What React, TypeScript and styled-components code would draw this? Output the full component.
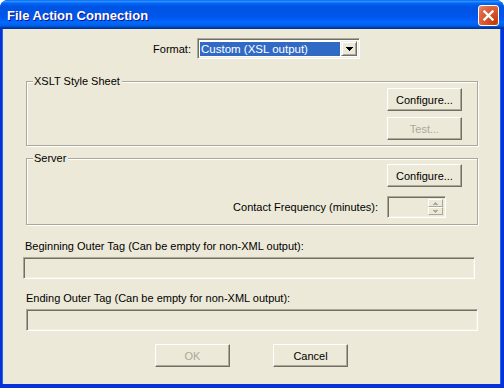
import React from "react";
import styled, { createGlobalStyle } from "styled-components";

const GlobalStyle = createGlobalStyle`
  html, body {
    margin: 0;
    padding: 0;
    background: #ffffff;
    overflow: hidden;
  }
  body {
    font-family: "Liberation Sans", Arial, sans-serif;
    font-size: 11px;
    color: #000;
  }
`;

const Window = styled.div`
  width: 504px;
  height: 388px;
  display: flex;
  flex-direction: column;
  box-sizing: border-box;
  border-radius: 8px 8px 0 0;
  background: #0831d9;
  overflow: hidden;
`;

const TitleBar = styled.div`
  height: 29px;
  flex: 0 0 29px;
  display: flex;
  align-items: center;
  justify-content: space-between;
  padding: 0 5px 0 7px;
  background: linear-gradient(
    to bottom,
    #0058ee 0%,
    #3593ff 4%,
    #288eff 6%,
    #127dff 8%,
    #036ffc 10%,
    #0262ee 14%,
    #0057e5 20%,
    #0054e3 24%,
    #0055eb 56%,
    #005bf5 66%,
    #026afe 76%,
    #0062ef 86%,
    #0052d6 92%,
    #0040ab 94%,
    #003092 100%
  );
`;

const Title = styled.span`
  font-family: "Liberation Sans", Arial, sans-serif;
  font-weight: bold;
  font-size: 13px;
  color: #fff;
  text-shadow: 1px 1px 0 #0f1089;
  margin-top: 1px;
`;

const CloseButton = styled.div`
  width: 21px;
  height: 21px;
  box-sizing: border-box;
  border: 1px solid #fff;
  border-radius: 3px;
  display: flex;
  align-items: center;
  justify-content: center;
  background: radial-gradient(
    circle at 85% 85%,
    #c43c0a 0%,
    #d9542a 45%,
    #e06a45 75%,
    #e8907a 100%
  );
  margin-top: 1px;
`;

const Body = styled.div`
  flex: 1;
  margin: 0 4px 4px 3px;
  background: #ece9d8;
  display: flex;
  flex-direction: column;
  padding-top: 9px;
  box-shadow: -1px 0 0 #166aee, 1px 0 0 #166aee;
`;

const FormatRow = styled.div`
  display: flex;
  align-items: center;
  gap: 6px;
  margin-left: 147px;
  height: 21px;
`;

const FormatLabel = styled.span`
  width: 41px;
  text-align: right;
`;

const Combo = styled.div`
  width: 163px;
  height: 21px;
  box-sizing: border-box;
  display: flex;
  align-items: stretch;
  padding: 2px;
  gap: 1px;
  background: #fff;
  border-top: 1px solid #aca899;
  border-left: 1px solid #aca899;
  border-right: 1px solid #fff;
  border-bottom: 1px solid #fff;
  box-shadow: inset 1px 1px 0 #716f64, inset -1px -1px 0 #f1efe2;
`;

const ComboValue = styled.div`
  flex: 1;
  background: #316ac5;
  color: #fff;
  display: flex;
  align-items: center;
  padding-left: 1px;
  margin: 1px 0 0 0;
  font-size: 11.5px;
`;

const ComboArrow = styled.div`
  width: 16px;
  box-sizing: border-box;
  background: #ece9d8;
  display: flex;
  align-items: center;
  justify-content: center;
  border-top: 1px solid #f1efe2;
  border-left: 1px solid #f1efe2;
  border-right: 1px solid #716f64;
  border-bottom: 1px solid #716f64;
  box-shadow: inset 1px 1px 0 #fff, inset -1px -1px 0 #aca899;
`;

const Group = styled.div<{ $top: number; $height: number }>`
  position: relative;
  margin: ${({ $top }) => $top}px 22px 0 23px;
  height: ${({ $height }) => $height}px;
  box-sizing: border-box;
  border: 1px solid #aca899;
  box-shadow: inset 1px 1px 0 #fff, 1px 1px 0 #fff;
  display: flex;
  flex-direction: column;
  align-items: flex-end;
  padding: ${({ $height }) => ($height > 65 ? "5px" : "6px")} 15px 0 0;
`;

const Caption = styled.span`
  position: absolute;
  top: -8px;
  left: 6px;
  padding: 0 2px 0 1px;
  background: #ece9d8;
  line-height: 14px;
`;

const Button = styled.button<{ $disabled?: boolean }>`
  width: 75px;
  height: 23px;
  margin: 0;
  padding: 0;
  box-sizing: border-box;
  font-family: "Liberation Sans", Arial, sans-serif;
  font-size: 11px;
  color: ${({ $disabled }) => ($disabled ? "#aca899" : "#000")};
  background: #ece9d8;
  border-top: 1px solid #fff;
  border-left: 1px solid #fff;
  border-right: 1px solid #716f64;
  border-bottom: 1px solid #716f64;
  box-shadow: inset -1px -1px 0 #aca899;
  outline: none;
`;

const ButtonStack = styled.div`
  display: flex;
  flex-direction: column;
  gap: 6px;
`;

const ContactRow = styled.div`
  display: flex;
  align-items: center;
  gap: 9px;
  margin: 9px 16px 0 0;
`;

const Spin = styled.div`
  width: 59px;
  height: 22px;
  box-sizing: border-box;
  display: flex;
  justify-content: flex-end;
  padding: 2px 2px 2px 0;
  background: #ece9d8;
  border-top: 1px solid #aca899;
  border-left: 1px solid #aca899;
  border-right: 1px solid #fff;
  border-bottom: 1px solid #fff;
  box-shadow: inset 1px 1px 0 #716f64, inset -1px -1px 0 #f1efe2;
`;

const SpinButtons = styled.div`
  width: 15px;
  display: flex;
  flex-direction: column;
`;

const SpinButton = styled.div`
  flex: 1;
  box-sizing: border-box;
  display: flex;
  align-items: center;
  justify-content: center;
  border-top: 1px solid #fff;
  border-left: 1px solid #fff;
  border-right: 1px solid #aca899;
  border-bottom: 1px solid #aca899;
`;

const FieldLabel = styled.div<{ $top: number; $left: number }>`
  margin: ${({ $top }) => $top}px 0 0 ${({ $left }) => $left}px;
  line-height: 13px;
`;

const TextBox = styled.div<{ $left: number }>`
  margin: 4px 0 0 ${({ $left }) => $left}px;
  width: 452px;
  height: 22px;
  box-sizing: border-box;
  background: #ece9d8;
  border-top: 1px solid #aca899;
  border-left: 1px solid #aca899;
  border-right: 1px solid #fff;
  border-bottom: 1px solid #fff;
  box-shadow: inset 1px 1px 0 #716f64, inset -1px -1px 0 #f1efe2;
`;

const Footer = styled.div`
  display: flex;
  justify-content: center;
  gap: 43px;
  margin-top: 13px;
`;

const Arrow = ({ up, color }: { up?: boolean; color: string }) => (
  <svg width="5" height="3" viewBox="0 0 5 3">
    <path d={up ? "M2 0h1v1h1v1h1v1H0V2h1V1h1z" : "M0 0h5v1H4v1H3v1H2V2H1V1H0z"} fill={color} />
  </svg>
);

export default function App() {
  return (
    <>
      <GlobalStyle />
      <Window>
        <TitleBar>
          <Title>File Action Connection</Title>
          <CloseButton>
            <svg width="11" height="11" viewBox="0 0 11 11">
              <path
                d="M1.5 1.5 L9.5 9.5 M9.5 1.5 L1.5 9.5"
                stroke="#fff"
                strokeWidth="2.4"
                strokeLinecap="square"
              />
            </svg>
          </CloseButton>
        </TitleBar>
        <Body>
          <FormatRow>
            <FormatLabel>Format:</FormatLabel>
            <Combo>
              <ComboValue>Custom (XSL output)</ComboValue>
              <ComboArrow>
                <svg width="7" height="4" viewBox="0 0 7 4">
                  <path d="M0 0h7v1H6v1H5v1H4v1H3V3H2V2H1V1H0z" fill="#000" />
                </svg>
              </ComboArrow>
            </Combo>
          </FormatRow>

          <Group $top={22} $height={65}>
            <Caption>XSLT Style Sheet</Caption>
            <ButtonStack>
              <Button>Configure...</Button>
              <Button $disabled>Test...</Button>
            </ButtonStack>
          </Group>

          <Group $top={12} $height={67}>
            <Caption>Server</Caption>
            <Button>Configure...</Button>
            <ContactRow>
              <span>Contact Frequency (minutes):</span>
              <Spin>
                <SpinButtons>
                  <SpinButton>
                    <Arrow up color="#aca899" />
                  </SpinButton>
                  <SpinButton>
                    <Arrow color="#aca899" />
                  </SpinButton>
                </SpinButtons>
              </Spin>
            </ContactRow>
          </Group>

          <FieldLabel $top={15} $left={22}>
            Beginning Outer Tag (Can be empty for non-XML output):
          </FieldLabel>
          <TextBox $left={20} />

          <FieldLabel $top={13} $left={23}>
            Ending Outer Tag (Can be empty for non-XML output):
          </FieldLabel>
          <TextBox $left={23} />

          <Footer>
            <Button $disabled>OK</Button>
            <Button>Cancel</Button>
          </Footer>
        </Body>
      </Window>
    </>
  );
}
